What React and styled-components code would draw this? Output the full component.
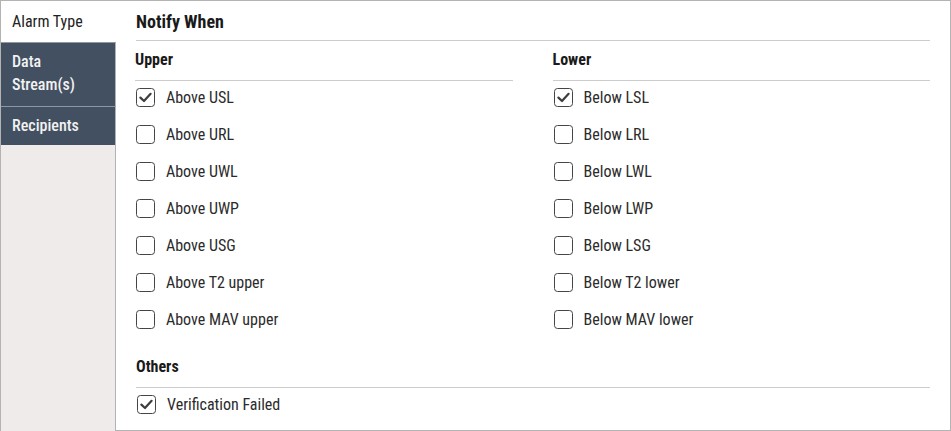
import React from 'react'
import styled, { createGlobalStyle } from 'styled-components'

const GlobalStyle = createGlobalStyle`
  html, body {
    margin: 0;
    padding: 0;
    background: #fff;
  }
  body {
    font-family: "Roboto Condensed", "Liberation Sans Narrow", "DejaVu Sans Condensed", Roboto, sans-serif;
  }
  * { box-sizing: border-box; }
`

const upper = ['Above USL', 'Above URL', 'Above UWL', 'Above UWP', 'Above USG', 'Above T2 upper', 'Above MAV upper']
const lower = ['Below LSL', 'Below LRL', 'Below LWL', 'Below LWP', 'Below LSG', 'Below T2 lower', 'Below MAV lower']

const Frame = styled.div`
  display: flex;
  width: 951px;
  height: 431px;
  border-top: 1px solid #b3b3b3;
`

const Sidebar = styled.div`
  width: 116px;
  display: flex;
  flex-direction: column;
  background: #efebea;
  border-left: 1px solid #b3b3b3;
`

const Tab = styled.div`
  padding: ${p => (p.$tall ? '7px 11px 10px' : p.$active ? '9px 11px 9px' : '7px 11px 8px')};
  font-size: 16px;
  line-height: 23px;
  color: ${p => (p.$active ? '#222' : '#f2f2f2')};
  font-weight: ${p => (p.$active ? 400 : 500)};
  background: ${p => (p.$active ? '#fff' : '#435061')};
  border-right: 1px solid ${p => (p.$active ? 'transparent' : '#b3b3b3')};
  border-top: ${p => (p.$active ? 'none' : '1px solid #8e98a4')};
`

const Filler = styled.div`
  flex: 1;
  border-right: 1px solid #b3b3b3;
`

const Main = styled.div`
  flex: 1;
  padding: 0 20px 0 20px;
  border-right: 1px solid #b3b3b3;
  border-bottom: 1px solid #b3b3b3;
`

const Heading = styled.div`
  padding: 11px 0 8px;
  font-size: 18px;
  line-height: 20px;
  font-weight: 700;
  color: #1a1a1a;
  border-bottom: 1px solid #cccccc;
`

const Columns = styled.div`
  display: grid;
  grid-template-columns: 1fr 1fr;
  column-gap: 40px;
  margin-left: -1px;
`

const SubTitle = styled.div`
  padding: 9px 0 10px;
  margin-top: ${p => (p.$gap ? '16px' : '0')};
  font-size: 16px;
  line-height: 20px;
  font-weight: 700;
  color: #1a1a1a;
  border-bottom: 1px solid #cccccc;
`

const List = styled.div`
  display: flex;
  flex-direction: column;
  gap: 11px;
  padding-top: 3px;
`

const Row = styled.label`
  display: flex;
  align-items: center;
  height: 26px;
  gap: 11px;
  padding-left: 1px;
  font-size: 16px;
  color: #2b2b2b;
`

const Box = styled.span`
  width: 19px;
  height: 19px;
  border: 1.5px solid #454545;
  border-radius: 3.5px;
  display: flex;
  align-items: center;
  justify-content: center;
  background: #fff;
`

const Check = ({ checked, label }) => (
  <Row>
    <Box>
      {checked && (
        <svg width="15" height="15" viewBox="0 0 15 15">
          <path d="M2.4 7.6 L6 11 L12.6 3.8" fill="none" stroke="#3d3d3d" strokeWidth="2.2" strokeLinecap="round" strokeLinejoin="round" />
        </svg>
      )}
    </Box>
    {label}
  </Row>
)

const Section = ({ title, items }) => (
  <div>
    <SubTitle>{title}</SubTitle>
    <List>
      {items.map((it, i) => (
        <Check key={it} label={it} checked={i === 0} />
      ))}
    </List>
  </div>
)

export default function App() {
  return (
    <>
      <GlobalStyle />
      <Frame>
        <Sidebar>
          <Tab $active>Alarm Type</Tab>
          <Tab $tall>Data<br />Stream(s)</Tab>
          <Tab>Recipients</Tab>
          <Filler />
        </Sidebar>
        <Main>
          <Heading>Notify When</Heading>
          <Columns>
            <Section title="Upper" items={upper} />
            <Section title="Lower" items={lower} />
          </Columns>
          <SubTitle $gap>Others</SubTitle>
          <List>
            <Check checked label="Verification Failed" />
          </List>
        </Main>
      </Frame>
    </>
  )
}
